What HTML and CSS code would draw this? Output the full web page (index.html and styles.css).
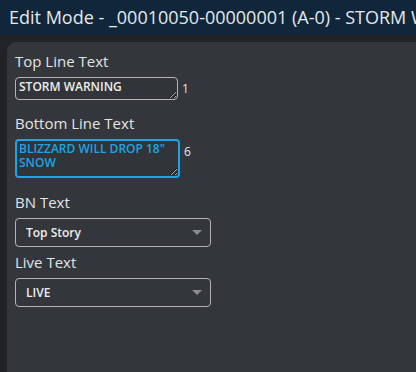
FILE: index.html
```html
<!DOCTYPE html>
<html lang="en">
<head>
    <meta charset="UTF-8">
    <meta name="viewport" content="width=device-width, initial-scale=1.0">
    <title>Edit Mode</title>
    <link rel="stylesheet" href="styles.css">
</head>
<body>
    <div class="titlebar">Edit Mode - _00010050-00000001 (A-0) - STORM WARNING</div>
    <div class="shell">
        <div class="panel">
            <label class="field-label" for="top-line">Top Line Text</label>
            <div class="text-row">
                <textarea id="top-line" class="line-input" rows="1">STORM WARNING</textarea>
                <span class="line-count">1</span>
            </div>

            <label class="field-label" for="bottom-line">Bottom Line Text</label>
            <div class="text-row top">
                <textarea id="bottom-line" class="line-input tall focused" rows="2">BLIZZARD WILL DROP 18" SNOW</textarea>
                <span class="line-count">6</span>
            </div>

            <label class="field-label" for="bn-text">BN Text</label>
            <div class="select-box">
                <span>Top Story</span>
                <span class="arrow"></span>
            </div>

            <label class="field-label" for="live-text">Live Text</label>
            <div class="select-box">
                <span>LIVE</span>
                <span class="arrow"></span>
            </div>
        </div>
    </div>
</body>
</html>
```

FILE: styles.css
```css
html, body {
    height: 100%;
}

body {
    margin: 0;
    display: flex;
    flex-direction: column;
    background-color: #222327;
    font-family: "Open Sans", Arial, sans-serif;
    overflow: hidden;
}

.titlebar {
    height: 35px;
    line-height: 35px;
    padding-left: 9px;
    background-color: #10263a;
    color: #e6e8ea;
    font-size: 18px;
    white-space: nowrap;
    overflow: hidden;
}

.shell {
    flex: 1;
    display: flex;
    padding: 7px 0 0 7px;
}

.panel {
    flex: 1;
    background-color: #33363a;
    border-radius: 9px 0 0 0;
    padding: 10px 8px;
    display: flex;
    flex-direction: column;
    align-items: flex-start;
}

.field-label {
    color: #e4e4e4;
    font-size: 15px;
    line-height: 18px;
    margin-bottom: 7px;
}

.text-row {
    display: flex;
    align-items: center;
    gap: 4px;
    margin-bottom: 14px;
}

.text-row.top {
    align-items: flex-start;
    margin-bottom: 15px;
}

.text-row.top .line-count {
    padding-top: 4px;
}

.line-input {
    width: 163px;
    height: 23px;
    box-sizing: border-box;
    margin: 0;
    padding: 2px 3px;
    background-color: #313438;
    border: 1px solid #b4b4b4;
    border-radius: 4px;
    color: #eeeeee;
    font-family: "Open Sans", Arial, sans-serif;
    font-weight: 600;
    font-size: 12px;
    line-height: 14px;
    resize: both;
    overflow: hidden;
    outline: none;
}

.line-input.tall {
    height: 39px;
    width: 165px;
}

.line-input.focused {
    border: 2px solid #1aa5e6;
    color: #1aa5e6;
    padding: 1px 2px;
}

.line-count {
    color: #e8e8e8;
    font-size: 12px;
}

.select-box {
    width: 196px;
    height: 29px;
    box-sizing: border-box;
    display: flex;
    align-items: center;
    justify-content: space-between;
    padding: 0 8px 0 10px;
    margin-bottom: 6px;
    border: 1px solid #b4b4b4;
    border-radius: 4px;
    color: #eeeeee;
    font-family: "Open Sans", Arial, sans-serif;
    font-weight: 600;
    font-size: 12px;
}

.arrow {
    width: 0;
    height: 0;
    border-left: 5px solid transparent;
    border-right: 5px solid transparent;
    border-top: 5px solid #8a8c8e;
}
```
